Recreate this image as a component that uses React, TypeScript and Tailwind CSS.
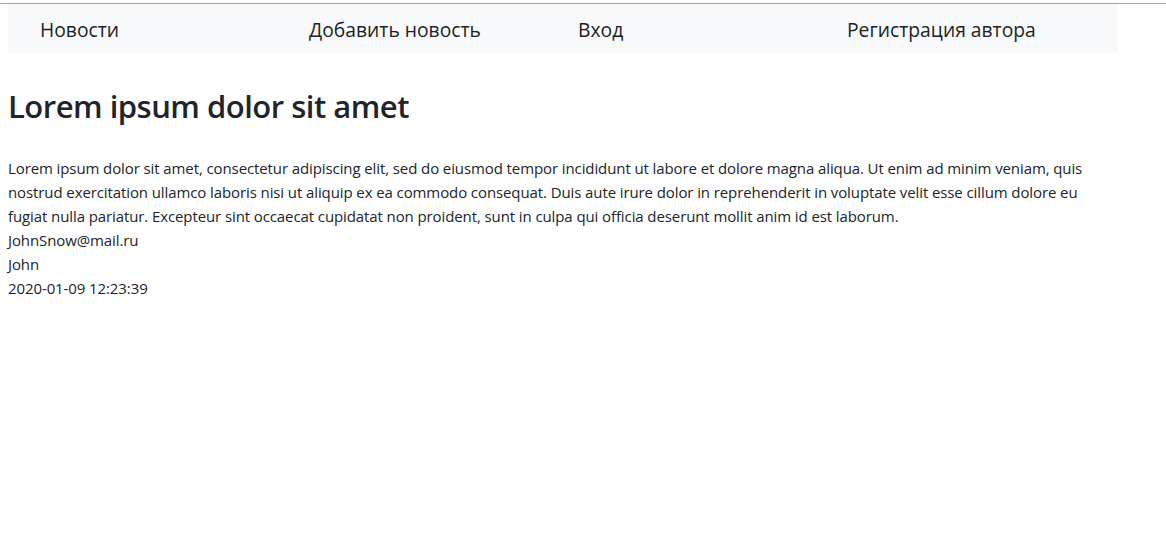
export default function App() {
  const links = ["Новости", "Добавить новость", "Вход", "Регистрация автора"];

  return (
    <div className="min-h-[538px] bg-white text-[#212529] font-['Open_Sans',sans-serif]">
      <div className="h-[3px] border-b border-[#a0a0a0] box-content" />
      <div className="px-2">
        {/* Navbar */}
        <nav className="w-[1110px] h-[49px] bg-[#f8f9fa] flex items-center pl-[32px] pt-[3px]">
          {links.map((l) => (
            <a key={l} href="#" className="w-[269px] shrink-0 text-[19.3px] leading-none font-medium text-[#1c1f23]">
              {l}
            </a>
          ))}
        </nav>

        {/* Post */}
        <h2 className="mt-[34px] text-[31px] leading-[38px] font-semibold tracking-[-0.5px]">
          Lorem ipsum dolor sit amet
        </h2>
        <div className="mt-[31px] w-[1110px] text-[15px] leading-[24px] tracking-[-0.1px]">
          <p>
            Lorem ipsum dolor sit amet, consectetur adipiscing elit, sed do eiusmod tempor incididunt ut labore et dolore magna aliqua. Ut enim ad minim veniam, quis nostrud exercitation ullamco laboris nisi ut aliquip ex ea commodo consequat. Duis aute irure dolor in reprehenderit in voluptate velit esse cillum dolore eu fugiat nulla pariatur. Excepteur sint occaecat cupidatat non proident, sunt in culpa qui officia deserunt mollit anim id est laborum.
          </p>
          <p>JohnSnow@mail.ru</p>
          <p>John</p>
          <p>2020-01-09 12:23:39</p>
        </div>
      </div>
    </div>
  );
}
